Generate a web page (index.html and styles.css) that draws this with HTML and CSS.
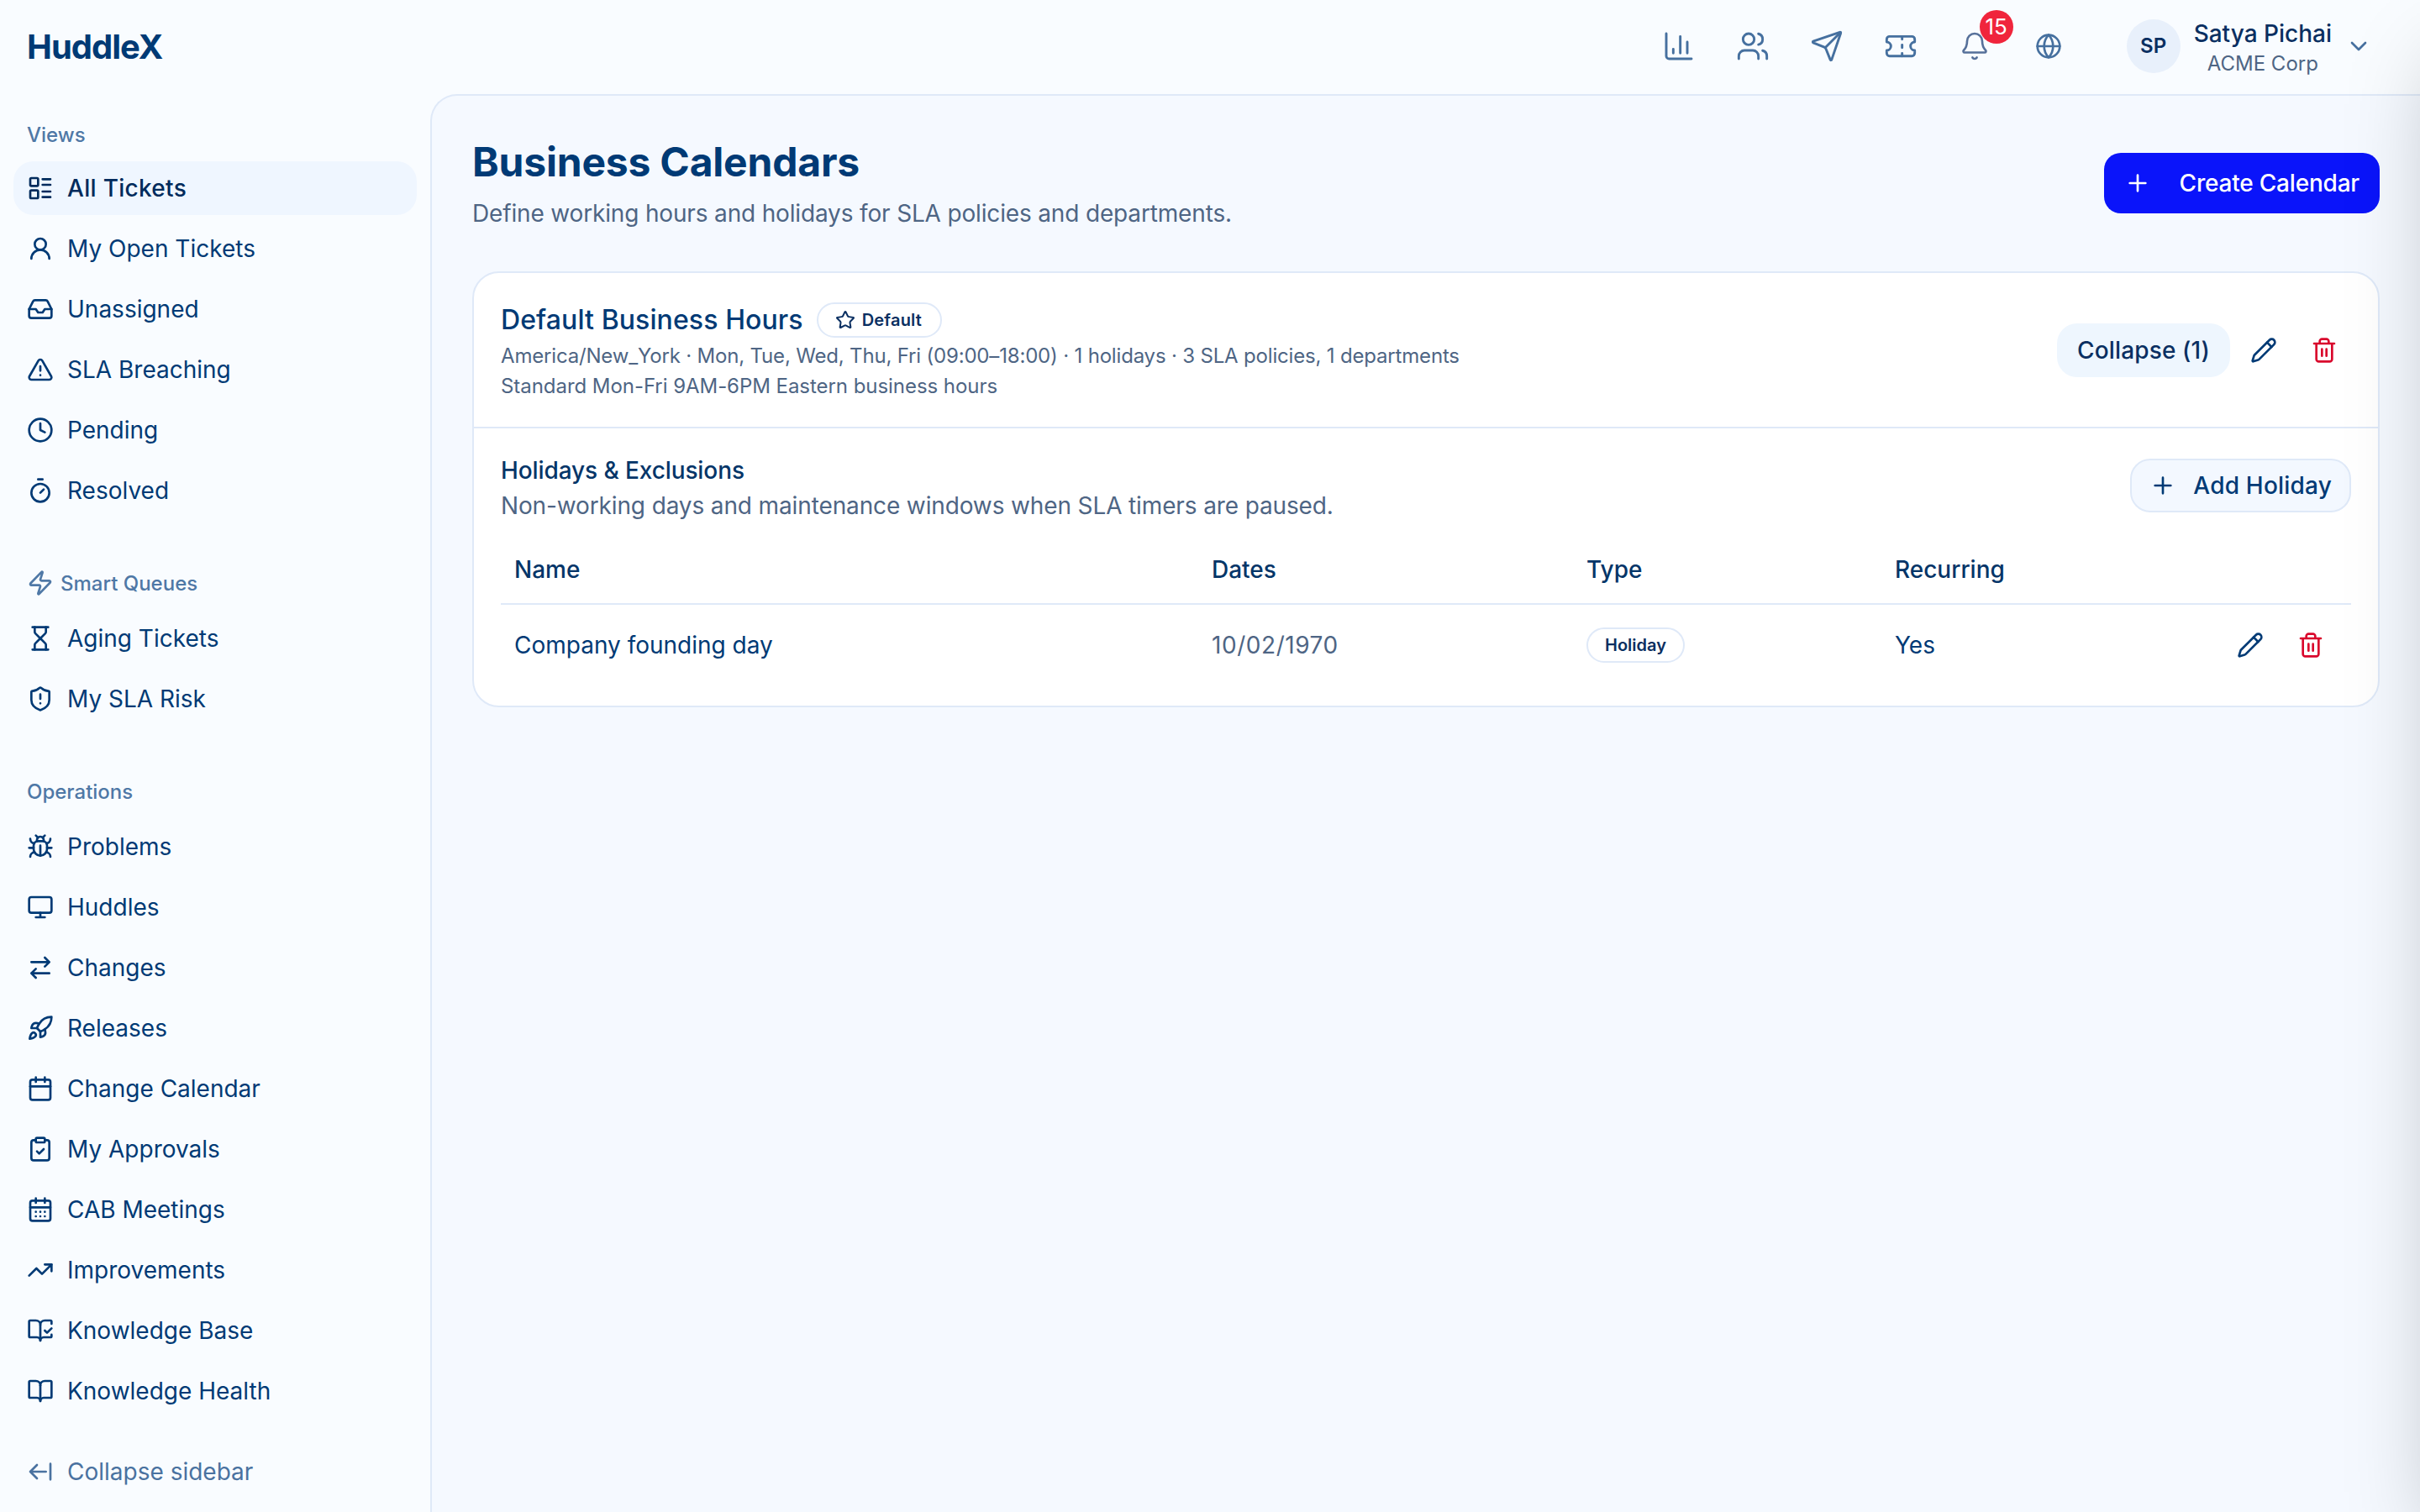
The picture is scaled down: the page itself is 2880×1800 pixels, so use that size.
FILE: index.html
```html
<!DOCTYPE html>
<html lang="en">
<head>
    <meta charset="UTF-8">
    <meta name="viewport" content="width=device-width, initial-scale=1.0">
    <title>Business Calendars - HuddleX</title>
    <link rel="stylesheet" href="styles.css">
</head>
<body>
    <!-- Icon sprite -->
    <svg class="sprite" xmlns="http://www.w3.org/2000/svg">
        <symbol id="i-list" viewBox="0 0 24 24"><rect x="3" y="3" width="7" height="7" rx="1"/><rect x="3" y="14" width="7" height="7" rx="1"/><path d="M14 4h7M14 9h7M14 15h7M14 20h7"/></symbol>
        <symbol id="i-user" viewBox="0 0 24 24"><circle cx="12" cy="8" r="5"/><path d="M20 21a8 8 0 0 0-16 0"/></symbol>
        <symbol id="i-inbox" viewBox="0 0 24 24"><polyline points="22 12 16 12 14 15 10 15 8 12 2 12"/><path d="M5.45 5.11 2 12v6a2 2 0 0 0 2 2h16a2 2 0 0 0 2-2v-6l-3.45-6.89A2 2 0 0 0 16.76 4H7.24a2 2 0 0 0-1.79 1.11z"/></symbol>
        <symbol id="i-alert" viewBox="0 0 24 24"><path d="m21.73 18-8-14a2 2 0 0 0-3.48 0l-8 14A2 2 0 0 0 4 21h16a2 2 0 0 0 1.73-3"/><path d="M12 9v4M12 17h.01"/></symbol>
        <symbol id="i-clock" viewBox="0 0 24 24"><circle cx="12" cy="12" r="10"/><polyline points="12 6 12 12 16 14"/></symbol>
        <symbol id="i-timer" viewBox="0 0 24 24"><path d="M10 2h4M12 14l3-3"/><circle cx="12" cy="14" r="8"/></symbol>
        <symbol id="i-zap" viewBox="0 0 24 24"><path d="M4 14a1 1 0 0 1-.78-1.63l9.9-10.2a.5.5 0 0 1 .86.46l-1.92 6.02A1 1 0 0 0 13 10h7a1 1 0 0 1 .78 1.63l-9.9 10.2a.5.5 0 0 1-.86-.46l1.92-6.02A1 1 0 0 0 11 14z"/></symbol>
        <symbol id="i-hourglass" viewBox="0 0 24 24"><path d="M5 22h14M5 2h14"/><path d="M17 22v-4.172a2 2 0 0 0-.586-1.414L12 12l-4.414 4.414A2 2 0 0 0 7 17.828V22"/><path d="M7 2v4.172a2 2 0 0 0 .586 1.414L12 12l4.414-4.414A2 2 0 0 0 17 6.172V2"/></symbol>
        <symbol id="i-shield" viewBox="0 0 24 24"><path d="M20 13c0 5-3.5 7.5-7.66 8.95a1 1 0 0 1-.67-.01C7.5 20.5 4 18 4 13V6a1 1 0 0 1 1-1c2 0 4.5-1.2 6.24-2.72a1.17 1.17 0 0 1 1.52 0C14.51 3.81 17 5 19 5a1 1 0 0 1 1 1z"/><path d="M12 8v4M12 16h.01"/></symbol>
        <symbol id="i-bug" viewBox="0 0 24 24"><path d="m8 2 1.88 1.88M14.12 3.88 16 2M9 7.13v-1a3.003 3.003 0 1 1 6 0v1"/><path d="M12 20c-3.3 0-6-2.7-6-6v-3a4 4 0 0 1 4-4h4a4 4 0 0 1 4 4v3c0 3.3-2.7 6-6 6"/><path d="M12 20v-9M6.53 9C4.6 8.8 3 7.1 3 5M6 13H2M3 21c0-2.1 1.7-3.9 3.8-4M20.97 5c0 2.1-1.6 3.8-3.5 4M22 13h-4M17.2 17c2.1.1 3.8 1.9 3.8 4"/></symbol>
        <symbol id="i-monitor" viewBox="0 0 24 24"><rect x="2" y="3" width="20" height="14" rx="2"/><path d="M8 21h8M12 17v4"/></symbol>
        <symbol id="i-swap" viewBox="0 0 24 24"><path d="m16 3 4 4-4 4M20 7H4M8 21l-4-4 4-4M4 17h16"/></symbol>
        <symbol id="i-rocket" viewBox="0 0 24 24"><path d="M4.5 16.5c-1.5 1.26-2 5-2 5s3.74-.5 5-2c.71-.84.7-2.13-.09-2.91a2.18 2.18 0 0 0-2.91-.09z"/><path d="m12 15-3-3a22 22 0 0 1 2-3.95A12.88 12.88 0 0 1 22 2c0 2.72-.78 7.5-6 11a22.35 22.35 0 0 1-4 2z"/><path d="M9 12H4s.55-3.03 2-4c1.62-1.08 5 0 5 0M12 15v5s3.03-.55 4-2c1.08-1.62 0-5 0-5"/></symbol>
        <symbol id="i-calendar" viewBox="0 0 24 24"><path d="M8 2v4M16 2v4"/><rect x="3" y="4" width="18" height="18" rx="2"/><path d="M3 10h18"/></symbol>
        <symbol id="i-clipboard" viewBox="0 0 24 24"><rect x="8" y="2" width="8" height="4" rx="1"/><path d="M16 4h2a2 2 0 0 1 2 2v14a2 2 0 0 1-2 2H6a2 2 0 0 1-2-2V6a2 2 0 0 1 2-2h2"/><path d="m9 14 2 2 4-4"/></symbol>
        <symbol id="i-calendar-days" viewBox="0 0 24 24"><path d="M8 2v4M16 2v4"/><rect x="3" y="4" width="18" height="18" rx="2"/><path d="M3 10h18M8 14h.01M12 14h.01M16 14h.01M8 18h.01M12 18h.01M16 18h.01"/></symbol>
        <symbol id="i-trending" viewBox="0 0 24 24"><polyline points="22 7 13.5 15.5 8.5 10.5 2 17"/><polyline points="16 7 22 7 22 13"/></symbol>
        <symbol id="i-book-check" viewBox="0 0 24 24"><path d="M12 21V7M16 12l2 2 4-4"/><path d="M22 6V4a1 1 0 0 0-1-1h-5a4 4 0 0 0-4 4 4 4 0 0 0-4-4H3a1 1 0 0 0-1 1v13a1 1 0 0 0 1 1h6a3 3 0 0 1 3 3 3 3 0 0 1 3-3h6a1 1 0 0 0 1-1v-1.3"/></symbol>
        <symbol id="i-book" viewBox="0 0 24 24"><path d="M12 7v14"/><path d="M3 18a1 1 0 0 1-1-1V4a1 1 0 0 1 1-1h5a4 4 0 0 1 4 4 4 4 0 0 1 4-4h5a1 1 0 0 1 1 1v13a1 1 0 0 1-1 1h-6a3 3 0 0 0-3 3 3 3 0 0 0-3-3z"/></symbol>
        <symbol id="i-collapse" viewBox="0 0 24 24"><path d="m9 6-6 6 6 6M3 12h14M21 19V5"/></symbol>
        <symbol id="i-pencil" viewBox="0 0 24 24"><path d="M21.174 6.812a1 1 0 0 0-3.986-3.987L3.842 16.174a2 2 0 0 0-.5.83l-1.321 4.352a.5.5 0 0 0 .623.622l4.353-1.32a2 2 0 0 0 .83-.497z"/><path d="m15 5 4 4"/></symbol>
        <symbol id="i-trash" viewBox="0 0 24 24"><path d="M3 6h18M19 6v14c0 1-1 2-2 2H7c-1 0-2-1-2-2V6M8 6V4c0-1 1-2 2-2h4c1 0 2 1 2 2v2M10 11v6M14 11v6"/></symbol>
        <symbol id="i-star" viewBox="0 0 24 24"><path d="M11.525 2.295a.53.53 0 0 1 .95 0l2.31 4.679a2.123 2.123 0 0 0 1.595 1.16l5.166.756a.53.53 0 0 1 .294.904l-3.736 3.638a2.123 2.123 0 0 0-.611 1.878l.882 5.14a.53.53 0 0 1-.771.56l-4.618-2.428a2.122 2.122 0 0 0-1.973 0L6.396 21.01a.53.53 0 0 1-.77-.56l.881-5.139a2.122 2.122 0 0 0-.611-1.879L2.16 9.795a.53.53 0 0 1 .294-.906l5.165-.755a2.122 2.122 0 0 0 1.597-1.16z"/></symbol>
        <symbol id="i-plus" viewBox="0 0 24 24"><path d="M5 12h14M12 5v14"/></symbol>
        <symbol id="i-chevron" viewBox="0 0 24 24"><path d="m6 9 6 6 6-6"/></symbol>
        <symbol id="i-chart" viewBox="0 0 24 24"><path d="M3 3v16a2 2 0 0 0 2 2h16M18 17V9M13 17V5M8 17v-3"/></symbol>
        <symbol id="i-users" viewBox="0 0 24 24"><path d="M16 21v-2a4 4 0 0 0-4-4H6a4 4 0 0 0-4 4v2"/><circle cx="9" cy="7" r="4"/><path d="M22 21v-2a4 4 0 0 0-3-3.87M16 3.13a4 4 0 0 1 0 7.75"/></symbol>
        <symbol id="i-send" viewBox="0 0 24 24"><path d="M14.536 21.686a.5.5 0 0 0 .937-.024l6.5-19a.496.496 0 0 0-.635-.635l-19 6.5a.5.5 0 0 0-.024.937l7.93 3.18a2 2 0 0 1 1.112 1.11z"/><path d="m21.854 2.147-10.94 10.939"/></symbol>
        <symbol id="i-ticket" viewBox="0 0 24 24"><path d="M2 9a3 3 0 0 1 0 6v2a2 2 0 0 0 2 2h16a2 2 0 0 0 2-2v-2a3 3 0 0 1 0-6V7a2 2 0 0 0-2-2H4a2 2 0 0 0-2 2Z"/><path d="M13 5v2M13 17v2M13 11v2"/></symbol>
        <symbol id="i-bell" viewBox="0 0 24 24"><path d="M10.268 21a2 2 0 0 0 3.464 0"/><path d="M3.262 15.326A1 1 0 0 0 4 17h16a1 1 0 0 0 .74-1.673C19.41 13.956 18 12.499 18 8A6 6 0 0 0 6 8c0 4.499-1.411 5.956-2.738 7.326"/></symbol>
        <symbol id="i-globe" viewBox="0 0 24 24"><circle cx="12" cy="12" r="10"/><path d="M12 2a14.5 14.5 0 0 0 0 20 14.5 14.5 0 0 0 0-20M2 12h20"/></symbol>
    </svg>

    <header class="topbar">
        <div class="logo">HuddleX</div>
        <div class="topbar-icons">
            <button class="top-btn"><svg class="icon"><use href="#i-chart"/></svg></button>
            <button class="top-btn"><svg class="icon"><use href="#i-users"/></svg></button>
            <button class="top-btn"><svg class="icon"><use href="#i-send"/></svg></button>
            <button class="top-btn"><svg class="icon"><use href="#i-ticket"/></svg></button>
            <button class="top-btn bell"><svg class="icon"><use href="#i-bell"/></svg><span class="badge">15</span></button>
            <button class="top-btn globe"><svg class="icon"><use href="#i-globe"/></svg></button>
        </div>
        <div class="user-menu">
            <div class="avatar">SP</div>
            <div class="user-info">
                <div class="user-name">Satya Pichai</div>
                <div class="user-org">ACME Corp</div>
            </div>
            <svg class="icon chevron"><use href="#i-chevron"/></svg>
        </div>
    </header>

    <div class="layout">
        <aside class="sidebar">
            <nav class="sidebar-nav">
                <div class="nav-label">Views</div>
                <a class="nav-item active"><svg class="icon"><use href="#i-list"/></svg>All Tickets</a>
                <a class="nav-item"><svg class="icon"><use href="#i-user"/></svg>My Open Tickets</a>
                <a class="nav-item"><svg class="icon"><use href="#i-inbox"/></svg>Unassigned</a>
                <a class="nav-item"><svg class="icon"><use href="#i-alert"/></svg>SLA Breaching</a>
                <a class="nav-item"><svg class="icon"><use href="#i-clock"/></svg>Pending</a>
                <a class="nav-item"><svg class="icon"><use href="#i-timer"/></svg>Resolved</a>

                <div class="nav-label with-icon"><svg class="icon"><use href="#i-zap"/></svg>Smart Queues</div>
                <a class="nav-item"><svg class="icon"><use href="#i-hourglass"/></svg>Aging Tickets</a>
                <a class="nav-item"><svg class="icon"><use href="#i-shield"/></svg>My SLA Risk</a>

                <div class="nav-label">Operations</div>
                <a class="nav-item"><svg class="icon"><use href="#i-bug"/></svg>Problems</a>
                <a class="nav-item"><svg class="icon"><use href="#i-monitor"/></svg>Huddles</a>
                <a class="nav-item"><svg class="icon"><use href="#i-swap"/></svg>Changes</a>
                <a class="nav-item"><svg class="icon"><use href="#i-rocket"/></svg>Releases</a>
                <a class="nav-item"><svg class="icon"><use href="#i-calendar"/></svg>Change Calendar</a>
                <a class="nav-item"><svg class="icon"><use href="#i-clipboard"/></svg>My Approvals</a>
                <a class="nav-item"><svg class="icon"><use href="#i-calendar-days"/></svg>CAB Meetings</a>
                <a class="nav-item"><svg class="icon"><use href="#i-trending"/></svg>Improvements</a>
                <a class="nav-item"><svg class="icon"><use href="#i-book-check"/></svg>Knowledge Base</a>
                <a class="nav-item"><svg class="icon"><use href="#i-book"/></svg>Knowledge Health</a>
            </nav>
            <a class="nav-item collapse-link"><svg class="icon"><use href="#i-collapse"/></svg>Collapse sidebar</a>
        </aside>

        <main class="content">
            <div class="page-head">
                <div>
                    <h1 class="page-title">Business Calendars</h1>
                    <p class="page-sub">Define working hours and holidays for SLA policies and departments.</p>
                </div>
                <button class="btn-primary"><svg class="icon"><use href="#i-plus"/></svg>Create Calendar</button>
            </div>

            <section class="card">
                <div class="card-head">
                    <div class="card-info">
                        <div class="card-title-row">
                            <h2 class="card-title">Default Business Hours</h2>
                            <span class="pill pill-default"><svg class="icon"><use href="#i-star"/></svg>Default</span>
                        </div>
                        <div class="card-meta">America/New_York · Mon, Tue, Wed, Thu, Fri (09:00–18:00) · 1 holidays · 3 SLA policies, 1 departments</div>
                        <div class="card-meta">Standard Mon-Fri 9AM-6PM Eastern business hours</div>
                    </div>
                    <div class="actions">
                        <button class="btn-soft">Collapse (1)</button>
                        <button class="icon-btn"><svg class="icon"><use href="#i-pencil"/></svg></button>
                        <button class="icon-btn danger"><svg class="icon"><use href="#i-trash"/></svg></button>
                    </div>
                </div>

                <div class="card-body">
                    <div class="holiday-head">
                        <div>
                            <h3 class="holiday-title">Holidays &amp; Exclusions</h3>
                            <p class="holiday-sub">Non-working days and maintenance windows when SLA timers are paused.</p>
                        </div>
                        <button class="btn-outline"><svg class="icon"><use href="#i-plus"/></svg>Add Holiday</button>
                    </div>

                    <table class="holiday-table">
                        <thead>
                            <tr>
                                <th class="col-name">Name</th>
                                <th class="col-dates">Dates</th>
                                <th class="col-type">Type</th>
                                <th class="col-rec">Recurring</th>
                                <th></th>
                            </tr>
                        </thead>
                        <tbody>
                            <tr>
                                <td>Company founding day</td>
                                <td class="muted">10/02/1970</td>
                                <td><span class="pill pill-type">Holiday</span></td>
                                <td>Yes</td>
                                <td>
                                    <div class="actions row-actions">
                                        <button class="icon-btn"><svg class="icon"><use href="#i-pencil"/></svg></button>
                                        <button class="icon-btn danger"><svg class="icon"><use href="#i-trash"/></svg></button>
                                    </div>
                                </td>
                            </tr>
                        </tbody>
                    </table>
                </div>
            </section>
        </main>
    </div>

    <!-- Closed drawer, parked off the right edge; only its shadow shows -->
    <div class="drawer"></div>
</body>
</html>
```

FILE: styles.css
```css
* {
    box-sizing: border-box;
}

html, body {
    margin: 0;
    padding: 0;
    height: 100%;
    overflow: hidden;
}

body {
    font-family: Inter, "Noto Sans", sans-serif;
    background-color: #f9fcff;
    color: #003a75;
    display: flex;
    flex-direction: column;
}

button {
    font-family: inherit;
    border: none;
    background: none;
    padding: 0;
    cursor: pointer;
}

h1, h2, h3, p {
    margin: 0;
}

.sprite {
    display: none;
}

.icon {
    width: 32px;
    height: 32px;
    flex-shrink: 0;
    fill: none;
    stroke: currentColor;
    stroke-width: 2;
    stroke-linecap: round;
    stroke-linejoin: round;
}

/* Top bar */
.topbar {
    height: 112px;
    flex-shrink: 0;
    display: flex;
    align-items: center;
    padding: 0 57px 2px 32px;
}

.logo {
    font-size: 40px;
    font-weight: 700;
    letter-spacing: -1px;
    color: #003a75;
}

.topbar-icons {
    margin-left: auto;
    display: flex;
    gap: 8px;
}

.top-btn {
    position: relative;
    width: 80px;
    height: 80px;
    display: flex;
    align-items: center;
    justify-content: center;
    color: #46709f;
}

.top-btn .icon {
    width: 40px;
    height: 40px;
    stroke-width: 1.75;
}

.top-btn.bell {
    color: #56709a;
}

.top-btn.bell .icon {
    width: 36px;
    height: 36px;
}

.top-btn.globe .icon {
    width: 32px;
    height: 32px;
    stroke-width: 2;
}

.badge {
    position: absolute;
    top: -3px;
    right: -6px;
    width: 40px;
    height: 40px;
    border-radius: 50%;
    background-color: #f0253c;
    color: #fff;
    font-size: 26px;
    line-height: 40px;
    text-align: center;
}

.user-menu {
    display: flex;
    align-items: center;
    margin-left: 53px;
}

.avatar {
    width: 64px;
    height: 64px;
    border-radius: 50%;
    background-color: #e8f0fb;
    color: #0a2f61;
    font-size: 24px;
    font-weight: 600;
    line-height: 64px;
    text-align: center;
}

.user-info {
    margin: 6px 0 0 16px;
    text-align: center;
}

.user-name {
    font-size: 28px;
    font-weight: 500;
    line-height: 36px;
    color: #0a2f61;
}

.user-org {
    font-size: 24px;
    line-height: 36px;
    color: #4e6584;
}

.chevron {
    margin-left: 16px;
    color: #46709f;
}

/* Page layout */
.layout {
    flex: 1;
    display: flex;
    min-height: 0;
}

.sidebar {
    width: 512px;
    flex-shrink: 0;
    display: flex;
    flex-direction: column;
    padding: 0 16px 16px;
}

.sidebar-nav {
    flex: 1;
    display: flex;
    flex-direction: column;
    gap: 8px;
}

.nav-label {
    height: 40px;
    display: flex;
    align-items: center;
    margin: 50px 0 6px;
    padding-left: 16px;
    font-size: 24px;
    font-weight: 500;
    color: #4f78a6;
}

.nav-label:first-child {
    margin-top: 28px;
    margin-bottom: 4px;
}

.nav-label.with-icon .icon {
    margin-right: 8px;
}

.nav-item {
    height: 64px;
    flex-shrink: 0;
    display: flex;
    align-items: center;
    gap: 16px;
    padding-left: 16px;
    border-radius: 24px;
    font-size: 28px;
    color: #003a75;
}

.nav-item.active {
    background-color: #eff6ff;
    color: #002b5c;
    font-weight: 500;
    letter-spacing: 0.3px;
}

.collapse-link {
    color: #4a72a0;
}

.content {
    flex: 1;
    min-width: 0;
    background-color: #f5f9ff;
    border-top: 2px solid #dfe9f8;
    border-left: 2px solid #dfe9f8;
    border-top-left-radius: 32px;
    padding: 47px 48px 0;
}

.page-head {
    display: flex;
    align-items: center;
    justify-content: space-between;
    margin-bottom: 48px;
}

.page-title {
    font-size: 48px;
    font-weight: 700;
    line-height: 64px;
    letter-spacing: -0.2px;
    color: #003a75;
}

.page-sub {
    margin-top: 8px;
    font-size: 28px;
    line-height: 42px;
    letter-spacing: -0.16px;
    color: #4e6584;
}

.btn-primary {
    height: 72px;
    display: flex;
    align-items: center;
    gap: 34px;
    padding: 0 24px;
    border-radius: 20px;
    background-color: #0a14fa;
    color: #fff;
    font-size: 28px;
    font-weight: 500;
    letter-spacing: -0.2px;
}

/* Calendar card */
.card {
    background-color: #fff;
    border: 2px solid #dfe9f8;
    border-radius: 32px;
}

.card-head {
    height: 185px;
    display: flex;
    align-items: center;
    justify-content: space-between;
    padding: 0 32px;
    border-bottom: 2px solid #dfe9f8;
}

.card-info {
    padding-top: 4px;
}

.card-title-row {
    display: flex;
    align-items: center;
    gap: 16px;
    margin-bottom: 4px;
}

.card-title {
    font-size: 32px;
    font-weight: 500;
    letter-spacing: 0.1px;
    color: #003a75;
}

.pill {
    display: inline-flex;
    align-items: center;
    border: 2px solid #dfe9f8;
    border-radius: 999px;
    background-color: #fff;
    color: #0a2f61;
    font-weight: 600;
}

.pill-default {
    height: 42px;
    gap: 8px;
    padding: 0 22px 0 20px;
    font-size: 20px;
    letter-spacing: 0.2px;
}

.pill-default .icon {
    width: 24px;
    height: 24px;
}

.pill-type {
    height: 42px;
    padding: 0 20px;
    font-size: 20px;
}

.card-meta {
    font-size: 24px;
    line-height: 36px;
    letter-spacing: -0.18px;
    color: #4e6584;
}

.card-meta + .card-meta {
    letter-spacing: -0.05px;
}

.actions {
    display: flex;
    align-items: center;
    gap: 8px;
}

.row-actions {
    justify-content: flex-end;
}

.btn-soft {
    height: 64px;
    padding: 0 24px;
    border-radius: 24px;
    background-color: #eef6fe;
    color: #0a2f61;
    font-size: 28px;
    font-weight: 500;
    letter-spacing: 0.15px;
}

.icon-btn {
    width: 64px;
    height: 64px;
    display: flex;
    align-items: center;
    justify-content: center;
    color: #003a75;
}

.icon-btn.danger {
    color: #d9072c;
}

.card-body {
    padding: 30px 32px 25px;
}

.holiday-head {
    display: flex;
    align-items: flex-start;
    justify-content: space-between;
}

.holiday-title {
    font-size: 28px;
    font-weight: 500;
    line-height: 41px;
    letter-spacing: -0.1px;
    color: #043568;
}

.holiday-sub {
    font-size: 28px;
    line-height: 42px;
    letter-spacing: -0.13px;
    color: #4e6584;
}

.btn-outline {
    height: 64px;
    margin-top: 6px;
    display: flex;
    align-items: center;
    gap: 20px;
    padding: 0 21px;
    border: 2px solid #dfe9f8;
    border-radius: 24px;
    background-color: #f3f8ff;
    color: #003a75;
    font-size: 28px;
    font-weight: 500;
    letter-spacing: 0.2px;
}

.holiday-table {
    width: 100%;
    margin-top: 14px;
    border-collapse: collapse;
    table-layout: fixed;
    font-size: 28px;
}

.holiday-table th {
    height: 82px;
    padding: 0 16px;
    border-bottom: 2px solid #dfe9f8;
    text-align: left;
    font-weight: 500;
    color: #043568;
}

.holiday-table td {
    height: 96px;
    padding: 0 16px;
    color: #003a75;
}

.holiday-table td.muted {
    color: #4e6584;
    letter-spacing: 0.55px;
}

.col-name {
    width: 830px;
}

.col-dates {
    width: 446px;
}

.col-type {
    width: 367px;
}

.col-rec {
    width: 300px;
}

/* Off-screen drawer */
.drawer {
    position: fixed;
    top: 0;
    left: 100%;
    width: 800px;
    height: 100%;
    box-shadow: 0 50px 100px -24px rgba(0, 0, 0, 0.25);
}
```
